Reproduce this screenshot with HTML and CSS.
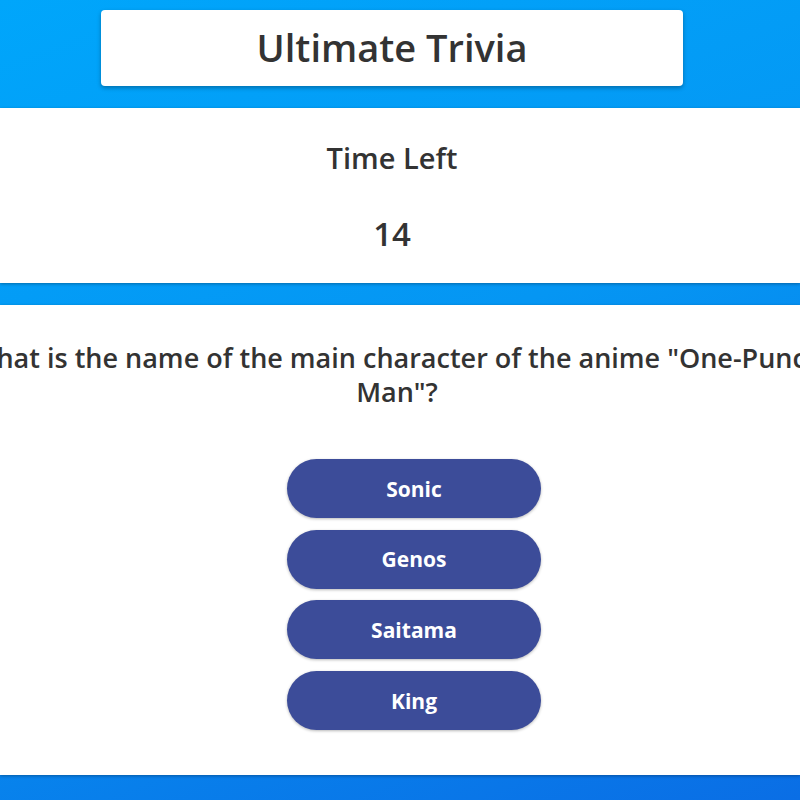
FILE: index.html
```html
<!DOCTYPE html>
<html>
<head>
<meta charset="utf-8">
<title>Ultimate Trivia</title>
<link rel="stylesheet" href="styles.css">
</head>
<body>
<header class="topbar">
  <div class="title-card">
    <h1 class="title">Ultimate Trivia</h1>
  </div>
</header>
<section class="band timer">
  <h2 class="timer-label">Time Left</h2>
  <div class="timer-value">14</div>
</section>
<section class="band quiz">
  <div class="question-wrap">
    <p class="question">What is the name of the main character of the anime "One-Punch Man"?</p>
  </div>
  <div class="answers">
    <button class="answer">Sonic</button>
    <button class="answer">Genos</button>
    <button class="answer">Saitama</button>
    <button class="answer">King</button>
  </div>
</section>
</body>
</html>
```
FILE: styles.css
```css
html, body {
  margin: 0;
  padding: 0;
}
body {
  min-height: 800px;
  overflow: hidden;
  background: linear-gradient(160deg, #00a6fb 0%, #0596f3 45%, #0a6ee5 100%);
  font-family: "Open Sans", "Noto Sans", sans-serif;
  color: #333;
  padding-top: 10px;
  box-sizing: border-box;
}
.topbar {
  display: flex;
  justify-content: center;
  padding-right: 16px;
  margin-bottom: 22px;
}
.title-card {
  width: 582px;
  height: 76px;
  background: #fff;
  border-radius: 4px;
  box-shadow: 0 2px 4px rgba(0, 0, 0, 0.3);
  display: flex;
  align-items: center;
  justify-content: center;
}
.title {
  margin: 0 0 2px 0;
  font-size: 38px;
  font-weight: 600;
  font-stretch: 93%;
  line-height: 1;
}
.band {
  background: #fff;
  box-shadow: 0 1px 3px rgba(0, 0, 0, 0.3);
}
.timer {
  height: 175px;
  box-sizing: border-box;
  padding: 30px 16px 0 0;
  text-align: center;
  margin-bottom: 22px;
}
.timer-label {
  margin: 0;
  font-size: 29px;
  font-weight: 600;
  font-stretch: 91%;
  line-height: normal;
}
.timer-value {
  margin-top: 34px;
  font-size: 33px;
  font-weight: 600;
  font-stretch: 92%;
  line-height: normal;
}
.quiz {
  height: 470px;
  box-sizing: border-box;
  padding: 36px 0 0 0;
}
.question-wrap {
  display: flex;
  justify-content: center;
  padding: 0 10px 0 4px;
}
.question {
  flex: 0 0 920px;
  width: 920px;
  margin: 0;
  text-align: center;
  font-size: 27px;
  font-weight: 600;
  font-stretch: 96%;
  line-height: 34px;
}
.answers {
  display: flex;
  flex-direction: column;
  align-items: center;
  gap: 11.7px;
  padding: 0 16px 0 44px;
  margin-top: 50px;
}
.answer {
  width: 254px;
  height: 59px;
  border: none;
  border-radius: 30px;
  background: #3c4c99;
  color: #fff;
  font-family: "Open Sans", "Noto Sans", sans-serif;
  font-size: 21px;
  font-weight: 700;
  font-stretch: 95%;
  box-shadow: 0 1px 3px rgba(0, 0, 0, 0.28);
  padding: 0;
  cursor: pointer;
}
```
